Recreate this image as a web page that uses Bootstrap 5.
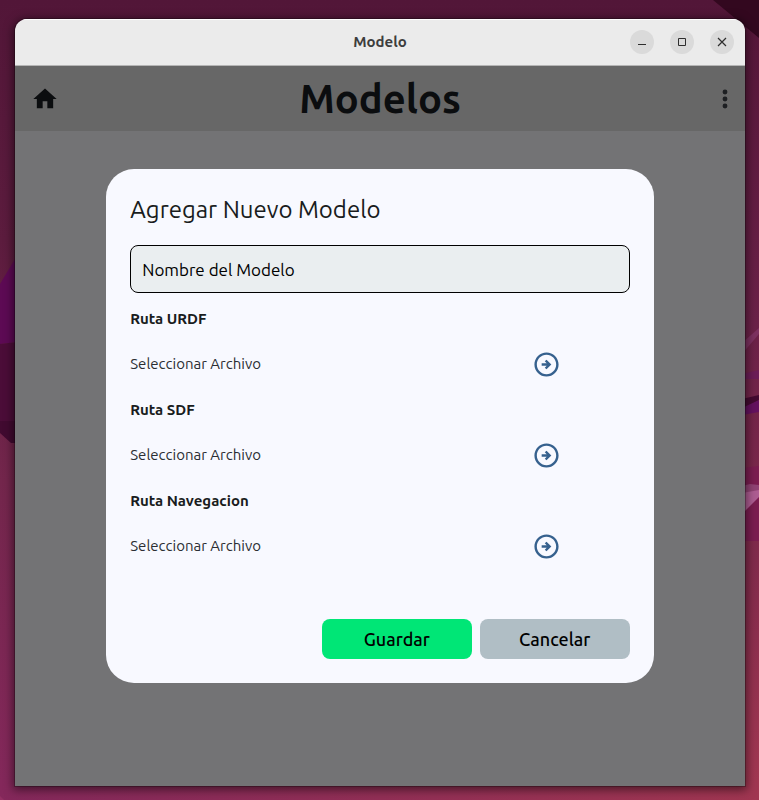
<!DOCTYPE html>
<html lang="es">
<head>
<meta charset="utf-8">
<meta name="viewport" content="width=device-width, initial-scale=1">
<title>Modelo</title>
<link href="https://cdn.jsdelivr.net/npm/bootstrap@5.3.0/dist/css/bootstrap.min.css" rel="stylesheet">
<style>
  body { font-family: Ubuntu, "Noto Sans", sans-serif; color: #191c20; background: #5c1c3e; }
  .desktop { padding: 19px 14px 14px 15px; isolation: isolate; }
  .wallpaper { z-index: -1; }
  .app-window { border-radius: 12px 12px 0 0; box-shadow: 0 2px 10px 2px rgba(0, 0, 0, .5), 0 0 0 1px rgba(0, 0, 0, .25); }
  .title-bar { height: 47px; background: #ebebeb; border-bottom: 1px solid #b5b5b5; box-shadow: inset 0 1px #fff; color: #3d3d3d; }
  .title-side { flex: 1 1 0; gap: 16px; padding-right: 11px; }
  .title-text { font-size: 15px; line-height: 20px; }
  .win-btn { width: 24px; height: 24px; background: #dadada; color: #2e2e2e; }
  .app-bar { height: 65px; background: #676767; color: #0b0d0f; }
  .app-bar h1 { font-size: 40px; line-height: 48px; }
  .bar-side { flex: 1 1 0; padding: 0 6px 0 16px; }
  .plain-btn { color: inherit; }
  .app-body { background: #737375; }
  .dialog-box { width: 75%; min-width: 320px; background: #f8f9ff; border-radius: 28px; padding: 24px; }
  .dialog-box h2 { font-size: 24px; line-height: 34px; margin-bottom: 18px; }
  .name-input, .name-input:focus { height: 48px; font-size: 17px; background: #eaeef0; border: 1px solid #000; border-radius: 8px; padding: 0 11px; color: #000; }
  .name-input::placeholder { color: #000; opacity: 1; }
  .routes { margin-top: 16px; gap: 16px; }
  .route-title { font-size: 15px; line-height: 20px; margin-bottom: 15px; }
  .route-text { font-size: 15px; line-height: 20px; color: #2b2e33; }
  .route-btn { width: 40px; height: 40px; color: #36618e; }
  .dialog-actions { margin-top: 53px; }
  .action-btn { width: 150px; height: 40px; border-radius: 8px; font-size: 18px; line-height: 24px; }
  .btn-save, .btn-save:hover { background: #00e676; color: #000; }
  .btn-cancel, .btn-cancel:hover { background: #b0bec5; color: #000; }
</style>
</head>
<body>
<div class="desktop position-relative vh-100 d-flex">
  <svg class="wallpaper position-absolute top-0 start-0 w-100 h-100" viewBox="0 0 759 800" preserveAspectRatio="none" aria-hidden="true">
    <defs>
      <linearGradient id="sky" x1="0" y1="0" x2="0" y2="1">
        <stop offset="0" stop-color="#521638"/>
        <stop offset=".3" stop-color="#5c1c3e"/>
        <stop offset=".6" stop-color="#73264c"/>
        <stop offset="1" stop-color="#84285b"/>
      </linearGradient>
      <linearGradient id="glow" x1="0" y1="0" x2="0" y2="1">
        <stop offset="0" stop-color="#541638"/>
        <stop offset=".4" stop-color="#6b2148"/>
        <stop offset=".7" stop-color="#822b4c"/>
        <stop offset="1" stop-color="#a43852"/>
      </linearGradient>
      <linearGradient id="floor" x1="0" y1="0" x2="1" y2="0">
        <stop offset="0" stop-color="#84285b"/>
        <stop offset="1" stop-color="#a03651"/>
      </linearGradient>
    </defs>
    <path fill="url(#sky)" d="M0 0h759v800H0z"/>
    <path fill="url(#glow)" d="M740 0h19v800h-19z"/>
    <path fill="url(#floor)" d="M0 780h759v20H0z"/>
    <path fill="#33081f" d="M713 0h46v38z"/>
    <path fill="#5d0a54" d="M0 284l18-30v88L0 344z"/>
    <path fill="#4b0d38" d="M0 344l18-2v80H0z"/>
    <path fill="#410a30" d="M0 421h18v22H11l-11-10z"/>
    <path fill="#7d3160" d="M742 343l17-15v6l-17 20z"/>
    <path fill="#6c1d57" d="M742 374l17-4v9h-17z"/>
    <path fill="#440a31" d="M742 399l17-4v5l-17 10z"/>
    <path fill="#65115f" d="M742 408l17-8v12l-17 3z"/>
    <path fill="#7b1d50" d="M742 468l17-2v75h-17z"/>
    <path fill="#914374" d="M742 486l8-2 9 1v6l-17 4z"/>
    <path fill="#ae5d92" d="M742 493l17-3v7l-17 17z"/>
    <path fill="#923063" d="M0 796l4 4H0z"/>
  </svg>

  <div class="app-window flex-fill d-flex flex-column overflow-hidden">
    <header class="title-bar d-flex align-items-center flex-shrink-0">
      <div class="title-side"></div>
      <div class="title-text fw-bold">Modelo</div>
      <div class="title-side d-flex justify-content-end">
        <button type="button" class="win-btn btn p-0 border-0 rounded-circle d-flex align-items-center justify-content-center" aria-label="Minimizar">
          <svg width="24" height="24" viewBox="0 0 24 24" fill="none" stroke="currentColor"><path d="M8 14.500h8"/></svg>
        </button>
        <button type="button" class="win-btn btn p-0 border-0 rounded-circle d-flex align-items-center justify-content-center" aria-label="Maximizar">
          <svg width="24" height="24" viewBox="0 0 24 24" fill="none" stroke="currentColor"><path d="M8.500 8.500h7v7h-7z"/></svg>
        </button>
        <button type="button" class="win-btn btn p-0 border-0 rounded-circle d-flex align-items-center justify-content-center" aria-label="Cerrar">
          <svg width="24" height="24" viewBox="0 0 24 24" fill="none" stroke="currentColor" stroke-width="1.200"><path d="M8 8l8 8M16 8l-8 8"/></svg>
        </button>
      </div>
    </header>

    <div class="position-relative flex-fill d-flex flex-column">
      <nav class="app-bar d-flex align-items-center flex-shrink-0">
        <div class="bar-side d-flex">
          <button type="button" class="plain-btn btn p-0 border-0 d-flex" aria-label="Inicio">
            <svg width="28" height="28" viewBox="0 0 24 24" fill="currentColor"><path d="M10 20v-6h4v6h5v-8h3L12 3 2 12h3v8z"/></svg>
          </button>
        </div>
        <h1 class="fw-bold mb-0">Modelos</h1>
        <div class="bar-side d-flex justify-content-end">
          <button type="button" class="plain-btn btn p-0 border-0 d-flex" aria-label="Menú">
            <svg width="28" height="28" viewBox="0 0 24 24" fill="#1d1f22"><circle cx="12" cy="6" r="2.100"/><circle cx="12" cy="12" r="2.100"/><circle cx="12" cy="18" r="2.100"/></svg>
          </button>
        </div>
      </nav>
      <main class="app-body flex-fill"></main>

      <div class="position-absolute top-0 start-0 w-100 h-100 d-flex align-items-center justify-content-center">
        <form class="dialog-box" role="dialog" aria-labelledby="dlg-title">
          <h2 id="dlg-title" class="fw-normal">Agregar Nuevo Modelo</h2>
          <input type="text" class="name-input form-control" placeholder="Nombre del Modelo" aria-label="Nombre del Modelo">
          <div class="routes d-flex flex-column">
            <section>
              <h3 class="route-title fw-bold">Ruta URDF</h3>
              <div class="row g-0 align-items-center">
                <div class="col-8 route-text" id="urdf">Seleccionar Archivo</div>
                <div class="col-4 d-flex justify-content-center">
                  <button type="button" class="route-btn btn p-0 border-0 d-flex align-items-center justify-content-center" aria-labelledby="urdf">
                    <svg width="29" height="29" viewBox="0 0 24 24" fill="currentColor"><path d="M22 12c0-5.520-4.480-10-10-10S2 6.480 2 12s4.480 10 10 10 10-4.480 10-10zM4 12c0-4.420 3.580-8 8-8s8 3.580 8 8-3.580 8-8 8-8-3.580-8-8zm12 0l-4 4-1.410-1.410L12.170 13H8v-2h4.170l-1.590-1.590L12 8l4 4z"/></svg>
                  </button>
                </div>
              </div>
            </section>
            <section>
              <h3 class="route-title fw-bold">Ruta SDF</h3>
              <div class="row g-0 align-items-center">
                <div class="col-8 route-text" id="sdf">Seleccionar Archivo</div>
                <div class="col-4 d-flex justify-content-center">
                  <button type="button" class="route-btn btn p-0 border-0 d-flex align-items-center justify-content-center" aria-labelledby="sdf">
                    <svg width="29" height="29" viewBox="0 0 24 24" fill="currentColor"><path d="M22 12c0-5.520-4.480-10-10-10S2 6.480 2 12s4.480 10 10 10 10-4.480 10-10zM4 12c0-4.420 3.580-8 8-8s8 3.580 8 8-3.580 8-8 8-8-3.580-8-8zm12 0l-4 4-1.410-1.410L12.170 13H8v-2h4.170l-1.590-1.590L12 8l4 4z"/></svg>
                  </button>
                </div>
              </div>
            </section>
            <section>
              <h3 class="route-title fw-bold">Ruta Navegacion</h3>
              <div class="row g-0 align-items-center">
                <div class="col-8 route-text" id="nav">Seleccionar Archivo</div>
                <div class="col-4 d-flex justify-content-center">
                  <button type="button" class="route-btn btn p-0 border-0 d-flex align-items-center justify-content-center" aria-labelledby="nav">
                    <svg width="29" height="29" viewBox="0 0 24 24" fill="currentColor"><path d="M22 12c0-5.520-4.480-10-10-10S2 6.480 2 12s4.480 10 10 10 10-4.480 10-10zM4 12c0-4.420 3.580-8 8-8s8 3.580 8 8-3.580 8-8 8-8-3.580-8-8zm12 0l-4 4-1.410-1.410L12.170 13H8v-2h4.170l-1.590-1.590L12 8l4 4z"/></svg>
                  </button>
                </div>
              </div>
            </section>
          </div>
          <div class="dialog-actions d-flex justify-content-end gap-2">
            <button type="submit" class="action-btn btn-save btn border-0 p-0 fw-medium">Guardar</button>
            <button type="button" class="action-btn btn-cancel btn border-0 p-0 fw-medium">Cancelar</button>
          </div>
        </form>
      </div>
    </div>
  </div>
</div>
<script src="https://cdn.jsdelivr.net/npm/bootstrap@5.3.0/dist/js/bootstrap.bundle.min.js"></script>
</body>
</html>
